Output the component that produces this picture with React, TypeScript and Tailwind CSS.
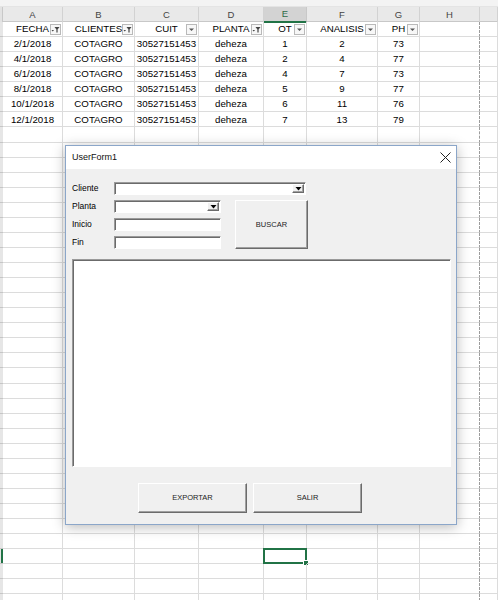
import React from "react";

const columns = ["A", "B", "C", "D", "E", "F", "G", "H", "I"];

const headers: { label: string; filtered: boolean }[] = [
  { label: "FECHA", filtered: true },
  { label: "CLIENTES", filtered: true },
  { label: "CUIT", filtered: false },
  { label: "PLANTA", filtered: true },
  { label: "OT", filtered: false },
  { label: "ANALISIS", filtered: false },
  { label: "PH", filtered: false },
];

const data = [
  ["2/1/2018", "COTAGRO", "30527151453", "deheza", "1", "2", "73"],
  ["4/1/2018", "COTAGRO", "30527151453", "deheza", "2", "4", "77"],
  ["6/1/2018", "COTAGRO", "30527151453", "deheza", "4", "7", "73"],
  ["8/1/2018", "COTAGRO", "30527151453", "deheza", "5", "9", "77"],
  ["10/1/2018", "COTAGRO", "30527151453", "deheza", "6", "11", "76"],
  ["12/1/2018", "COTAGRO", "30527151453", "deheza", "7", "13", "79"],
];

const ROWS = 39;
const SELECTED_ROW = 35;
const SELECTED_COL = 4;

const gridCols =
  "grid grid-cols-[3px_60px_72px_64px_65px_43px_71px_42px_60px_1fr]";

function FilterButton({ filtered }: { filtered: boolean }) {
  return (
    <div className="absolute right-[1px] top-[2px] w-[11px] h-[11px] border border-[#b9b9b9] bg-[#f7f7f7] flex items-center justify-center">
      {filtered ? (
        <svg width="9" height="9" viewBox="0 0 9 9">
          <polygon points="0.5,5 3,5 1.75,6.5" fill="#444" />
          <polygon points="3.5,2 8.5,2 6.6,4.5 6.6,7.5 5.4,7.5 5.4,4.5" fill="#444" />
        </svg>
      ) : (
        <svg width="9" height="9" viewBox="0 0 9 9">
          <polygon points="2,3.5 7,3.5 4.5,6" fill="#555" />
        </svg>
      )}
    </div>
  );
}

function Sheet() {
  return (
    <div className="font-['Liberation_Sans',sans-serif] text-black">
      <div className="h-[7px] bg-[#f3f3f3] border-b border-[#e4e4e4]" />
      <div className={`${gridCols} h-[15px] bg-[#e9e9e9] border-b border-[#c8c8c8]`}>
        <div className="bg-[#e2e2e2] border-r border-[#c8c8c8]" />
        {columns.map((c, i) => (
          <div
            key={c}
            className={
              i === SELECTED_COL
                ? "flex items-center justify-center text-[9.5px] text-[#2e6b48] bg-[#d3d3d3] border-r border-[#c8c8c8] border-b-2 border-b-[#217346] -mb-px"
                : "flex items-center justify-center text-[9.5px] text-[#444] border-r border-[#d2d2d2]"
            }
          >
            {c === "I" ? null : c}
          </div>
        ))}
      </div>
      <div className={`${gridCols} auto-rows-[15.07px]`}>
        {Array.from({ length: ROWS }).map((_, r) => (
          <React.Fragment key={r}>
            <div className="bg-[#e6e6e6] border-b border-[#c6c6c6] flex justify-end">
              {r === SELECTED_ROW && <div className="w-[2px] h-full bg-[#217346]" />}
            </div>
            {columns.map((c, ci) => {
              const dashed = c === "H";
              const base = `relative border-b border-[#dcdcdc] ${
                dashed ? "border-r border-r-[#9c9c9c] border-dashed" : "border-r"
              } flex items-center justify-center text-[9.7px] leading-none whitespace-nowrap`;
              let content: React.ReactNode = null;
              if (r === 0 && ci < headers.length) {
                content = (
                  <>
                    <span>{headers[ci].label}</span>
                    <FilterButton filtered={headers[ci].filtered} />
                  </>
                );
              } else if (r > 0 && r <= data.length && ci < 7) {
                content = <span>{data[r - 1][ci]}</span>;
              }
              return (
                <div key={c} className={base} style={dashed ? { borderBottomStyle: "solid" } : undefined}>
                  {content}
                  {r === SELECTED_ROW && ci === SELECTED_COL && (
                    <div className="absolute -left-[1px] -top-[1px] -right-[1px] -bottom-[1px] border-2 border-[#217346]">
                      <div className="absolute -right-[4px] -bottom-[4px] w-[6px] h-[6px] bg-[#217346] border border-white" />
                    </div>
                  )}
                </div>
              );
            })}
          </React.Fragment>
        ))}
      </div>
    </div>
  );
}

const sunken =
  "bg-white border border-t-[#9a9a9a] border-l-[#9a9a9a] border-b-white border-r-white shadow-[inset_1px_1px_0_#6b6b6b]";
const raised =
  "bg-[#f0f0f0] border border-t-white border-l-white border-b-[#6b6b6b] border-r-[#6b6b6b] shadow-[inset_-1px_-1px_0_#a0a0a0]";

function Combo({ className }: { className: string }) {
  return (
    <div className={`${sunken} ${className} h-[13px] flex justify-end items-stretch p-[1px]`}>
      <div className={`${raised} w-[12px] flex items-center justify-center`}>
        <svg width="7" height="4" viewBox="0 0 7 4">
          <polygon points="0.5,0 6.5,0 3.5,3.5" fill="#000" />
        </svg>
      </div>
    </div>
  );
}

function UserForm() {
  return (
    <div className="absolute left-[65px] top-[145px] w-[392px] h-[380px] border border-[#8ba6c9] bg-[#f0f0f0] shadow-[0_2px_12px_rgba(0,0,0,0.28)] flex flex-col font-['Liberation_Sans',sans-serif]">
      <div className="h-[23px] bg-white flex items-center justify-between pl-[6px] pr-[5px]">
        <span className="text-[9px] text-[#111]">UserForm1</span>
        <svg width="11" height="11" viewBox="0 0 11 11">
          <path d="M0.5 0.5 L10.5 10.5 M10.5 0.5 L0.5 10.5" stroke="#222" strokeWidth="1" />
        </svg>
      </div>
      <div className="flex-1 px-[6px] pt-[13px] flex flex-col">
        <div className="grid grid-cols-[42px_107px_14px_73px] grid-rows-[13px_13px_13px_13px] gap-y-[5px] text-[8.5px] text-black">
          <span className="flex items-center">Cliente</span>
          <Combo className="col-span-3 w-[192px]" />
          <span className="flex items-center">Planta</span>
          <Combo className="" />
          <div />
          <div className={`${raised} row-span-3 flex items-center justify-center text-[7.5px] text-[#222]`}>
            BUSCAR
          </div>
          <span className="flex items-center">Inicio</span>
          <div className={sunken} />
          <div />
          <span className="flex items-center">Fin</span>
          <div className={sunken} />
          <div />
        </div>
        <div className={`${sunken} mt-[10px] w-[379px] h-[208px]`} />
        <div className="mt-[16px] ml-[66px] flex gap-[6px]">
          <div className={`${raised} w-[109px] h-[30px] flex items-center justify-center text-[7.5px] text-[#222]`}>
            EXPORTAR
          </div>
          <div className={`${raised} w-[109px] h-[30px] flex items-center justify-center text-[7.5px] text-[#222]`}>
            SALIR
          </div>
        </div>
      </div>
    </div>
  );
}

export default function App() {
  return (
    <div className="relative w-[498px] h-[600px] overflow-hidden bg-white">
      <Sheet />
      <UserForm />
    </div>
  );
}
